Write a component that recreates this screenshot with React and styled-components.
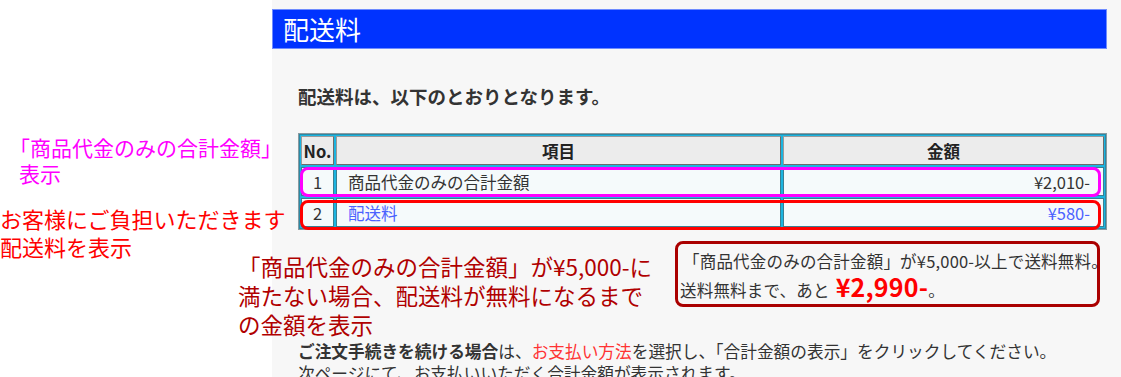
import React from "react";
import styled, { createGlobalStyle } from "styled-components";

const Global = createGlobalStyle`
  html, body { margin: 0; padding: 0; background: #ffffff; }
  body { font-family: "Noto Sans CJK JP", "Noto Sans", sans-serif; color: #333; overflow: hidden; }
`;

const Page = styled.div`
  position: relative;
  display: flex;
  width: 1121px;
  height: 377px;
  overflow: hidden;
`;

const Side = styled.div`
  width: 272px;
  flex: none;
  background: #ffffff;
`;

const Main = styled.main`
  flex: 1;
  background: #f7f7f7;
  padding: 9px 14px 0 0;
  display: flex;
  flex-direction: column;
`;

const TitleBar = styled.h1`
  margin: 0;
  height: 41px;
  box-sizing: border-box;
  background: #0033ff;
  border: 1px solid #6f8cff;
  color: #fff;
  font-size: 26px;
  font-weight: 400;
  line-height: 38px;
  padding-left: 10px;
`;

const Content = styled.div`
  padding-left: 26px;
  display: flex;
  flex-direction: column;
`;

const Lead = styled.p`
  margin: 35px 0 0 0;
  font-size: 18.5px;
  font-weight: 700;
  line-height: 24px;
  color: #333;
`;

const TableWrap = styled.div`
  position: relative;
  margin-top: 25px;
`;

const Table = styled.table`
  width: 809px;
  border-collapse: separate;
  border-spacing: 2px;
  background: #1cb4e0;
  border: 1px solid #8a9aa0;
  box-shadow: inset 0 0 0 1px #2a8aa6;
  font-size: 16.5px;
  table-layout: fixed;
`;

const Th = styled.th`
  height: 29px;
  box-sizing: border-box;
  padding: 0;
  background: #ececec;
  border: 1px solid #7c7c7c;
  border-color: #9a9a9a #6c6c6c #6c6c6c #9a9a9a;
  font-weight: 700;
  color: #222;
  text-align: center;
  line-height: 26px;
  width: ${(p) => p.$w || "auto"};
`;

const Td = styled.td`
  height: 29px;
  box-sizing: border-box;
  padding: 0 ${(p) => (p.$align === "right" ? "13px" : "11px")};
  background: #f5fafb;
  border: 1px solid #3a7f92;
  text-align: ${(p) => p.$align || "left"};
  color: ${(p) => (p.$link ? "#4b62ff" : "#333")};
  line-height: 26px;
`;

const RowMark = styled.div`
  position: absolute;
  left: 2px;
  width: 801px;
  top: ${(p) => p.$top}px;
  height: ${(p) => p.$h}px;
  box-sizing: border-box;
  border: 3px solid ${(p) => p.$color};
  border-radius: 8px;
  pointer-events: none;
`;

const NoticeBox = styled.div`
  align-self: flex-end;
  margin: 11px 7px 0 0;
  width: 425px;
  height: 66px;
  box-sizing: border-box;
  border: 3px solid #aa0000;
  border-radius: 8px;
  padding: 5px 0 0 2px;
  font-size: 16.5px;
  letter-spacing: 0.2px;
  color: #333;
  white-space: nowrap;
`;

const NoticeLine = styled.div`
  line-height: ${(p) => p.$lh || 24}px;
  padding-left: ${(p) => p.$indent || 0}px;
`;

const Big = styled.span`
  color: #ff0000;
  font-weight: 700;
  font-size: 25px;
  margin-left: 6px;
`;

const Guide = styled.p`
  margin: 33px 0 0 0;
  font-size: 16.7px;
  line-height: 22px;
  color: #333;
  white-space: nowrap;
`;

const Strong = styled.b`
  font-weight: 700;
`;

const Red = styled.span`
  color: #ff3333;
`;

const Callout = styled.div`
  position: absolute;
  left: ${(p) => p.$x}px;
  top: ${(p) => p.$y}px;
  color: ${(p) => p.$color};
  font-size: ${(p) => p.$size || 21}px;
  line-height: ${(p) => p.$lh || 28}px;
  white-space: nowrap;
`;

const Indent = styled.span`
  display: inline-block;
  padding-left: ${(p) => p.$w}px;
`;

export default function App() {
  return (
    <>
      <Global />
      <Page>
        <Side />
        <Main>
          <TitleBar>配送料</TitleBar>
          <Content>
            <Lead>配送料は、以下のとおりとなります。</Lead>
            <TableWrap>
              <Table>
                <thead>
                  <tr>
                    <Th $w="33px">No.</Th>
                    <Th $w="445px">項目</Th>
                    <Th>金額</Th>
                  </tr>
                </thead>
                <tbody>
                  <tr>
                    <Td $align="center">1</Td>
                    <Td>商品代金のみの合計金額</Td>
                    <Td $align="right">¥2,010-</Td>
                  </tr>
                  <tr>
                    <Td $align="center">2</Td>
                    <Td $link>配送料</Td>
                    <Td $align="right" $link>¥580-</Td>
                  </tr>
                </tbody>
              </Table>
              <RowMark $top={34} $h={30} $color="#ff00ff" />
              <RowMark $top={67} $h={30} $color="#ff0000" />
            </TableWrap>
            <NoticeBox>
              <NoticeLine $indent={3}>「商品代金のみの合計金額」が¥5,000-以上で送料無料。</NoticeLine>
              <NoticeLine $lh={27}>
                送料無料まで、あと<Big>¥2,990-</Big>。
              </NoticeLine>
            </NoticeBox>
            <Guide>
              <Strong>ご注文手続きを続ける場合</Strong>は、<Red>お支払い方法</Red>を選択し、「合計金額の表示」をクリックしてください。
              <br />
              次ページにて、お支払いいただく合計金額が表示されます。
            </Guide>
          </Content>
        </Main>

        <Callout $x={9} $y={134} $color="#ff00ff" $lh={26}>
          「商品代金のみの合計金額」
          <br />
          <Indent $w={10}>表示</Indent>
        </Callout>
        <Callout $x={0} $y={204} $color="#ff0000" $size={22}>
          お客様にご負担いただきます
          <br />
          配送料を表示
        </Callout>
        <Callout $x={238} $y={252} $color="#b00000" $size={22.5} $lh={29}>
          「商品代金のみの合計金額」が¥5,000-に
          <br />
          満たない場合、配送料が無料になるまで
          <br />
          の金額を表示
        </Callout>
      </Page>
    </>
  );
}
